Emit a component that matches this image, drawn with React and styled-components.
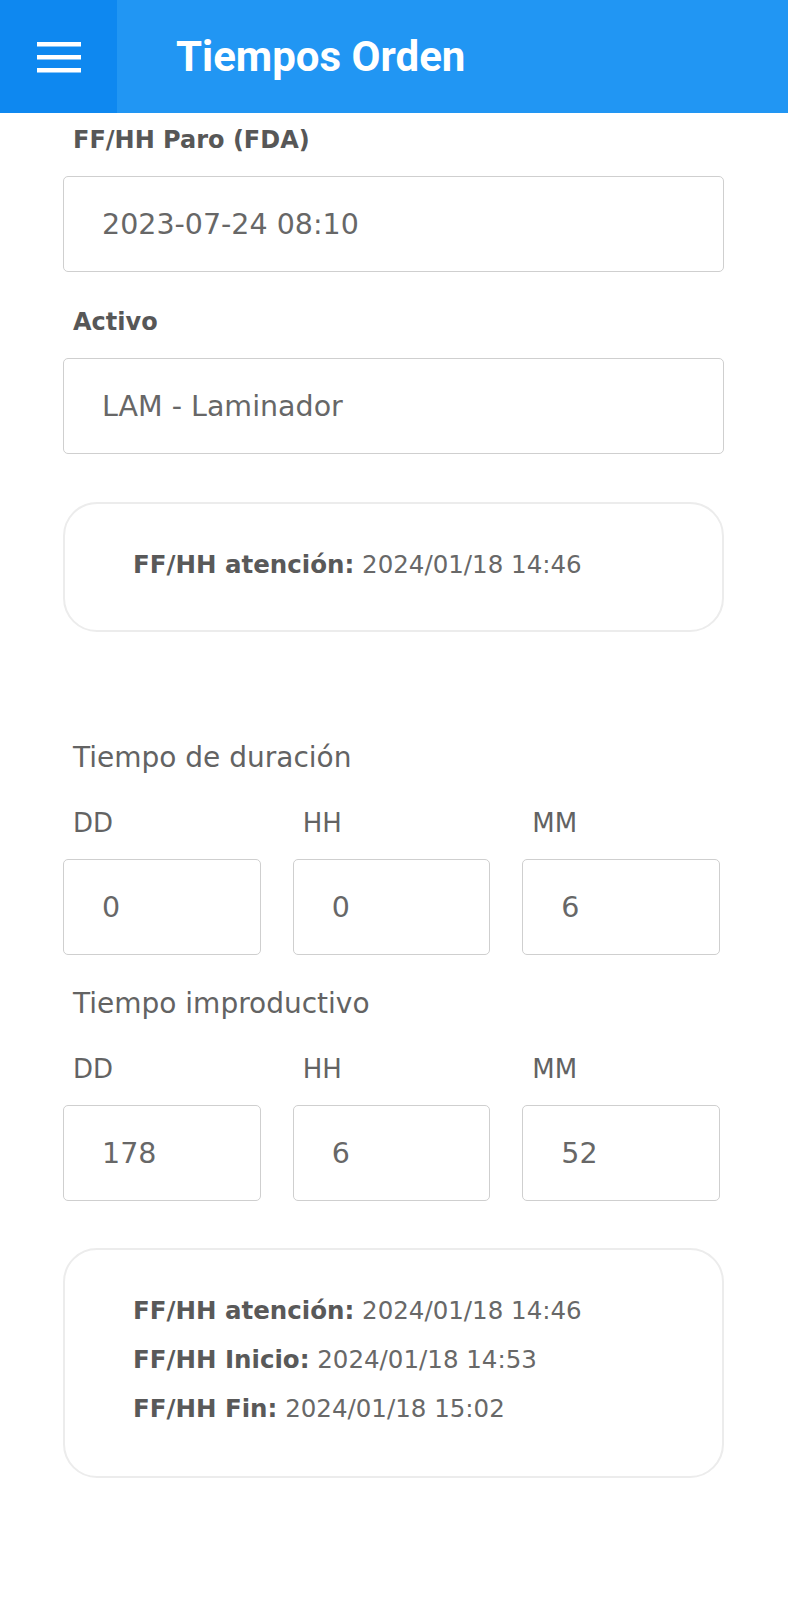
import React from 'react';
import styled, { createGlobalStyle } from 'styled-components';

const GlobalStyle = createGlobalStyle`
  * { box-sizing: border-box; }
  body {
    margin: 0;
    background: #ffffff;
    font-family: "DejaVu Sans", "Open Sans", sans-serif;
  }
`;

// barra superior
const AppBar = styled.header`
  display: flex;
  align-items: stretch;
  height: 113px;
  background: #2196f3;
`;

const MenuButton = styled.button`
  width: 117px;
  border: none;
  background: #0e88f0;
  display: flex;
  align-items: center;
  justify-content: center;
  padding: 0;
  cursor: pointer;
`;

const Title = styled.h1`
  margin: 0 0 0 59px;
  align-self: center;
  color: #ffffff;
  font-family: Roboto, "Liberation Sans", sans-serif;
  font-weight: 700;
  font-size: 42px;
`;

const Content = styled.main`
  padding: 11px 64px 120px 63px;
`;

const Label = styled.div`
  padding-left: 10px;
  font-size: ${p => p.size || 24}px;
  line-height: 32px;
  font-weight: ${p => (p.bold ? 700 : 400)};
  color: ${p => (p.bold ? '#575757' : '#636363')};
  margin-top: ${p => p.top || 0}px;
`;

const Field = styled.div`
  height: 96px;
  margin-top: 20px;
  border: 1.5px solid #cfcfcf;
  border-radius: 5px;
  display: flex;
  align-items: center;
  padding-left: 38px;
  font-size: 28.5px;
  color: #676767;
`;

const InfoCard = styled.section`
  margin-top: ${p => p.top}px;
  border: 2px solid #ececec;
  border-radius: 34px;
  padding: ${p => p.pad};
  padding-left: 68px;
  font-size: 24.5px;
  line-height: 49px;
  color: #686868;
`;

const InfoLine = styled.div`
  white-space: nowrap;
  b {
    font-weight: 700;
    color: #595959;
  }
`;

const TimeGrid = styled.div`
  display: grid;
  grid-template-columns: repeat(3, 1fr);
  column-gap: 32px;
  padding-right: 4px;
  margin-top: 33px;
`;

const TimeCell = styled.div`
  display: flex;
  flex-direction: column;
`;

const HamburgerIcon = () => (
  <svg width="44" height="36" viewBox="0 0 44 36">
    <rect x="0" y="3" width="44" height="4.5" fill="#fff" />
    <rect x="0" y="16" width="44" height="4.5" fill="#fff" />
    <rect x="0" y="29" width="44" height="4.5" fill="#fff" />
  </svg>
);

const TimeBlock = ({ title, values, top }) => (
  <>
    <Label top={top} size={28}>{title}</Label>
    <TimeGrid>
      {['DD', 'HH', 'MM'].map((unit, i) => (
        <TimeCell key={unit}>
          <Label size={26}>{unit}</Label>
          <Field>{values[i]}</Field>
        </TimeCell>
      ))}
    </TimeGrid>
  </>
);

const App = () => {
  return (
    <>
      <GlobalStyle />
      <AppBar>
        <MenuButton aria-label="menu">
          <HamburgerIcon />
        </MenuButton>
        <Title>Tiempos Orden</Title>
      </AppBar>
      <Content>
        <Label bold>FF/HH Paro (FDA)</Label>
        <Field>2023-07-24 08:10</Field>

        <Label bold top={34}>Activo</Label>
        <Field>LAM - Laminador</Field>

        <InfoCard top={48} pad="36px 20px 41px">
          <InfoLine><b>FF/HH atención:</b> 2024/01/18 14:46</InfoLine>
        </InfoCard>

        <TimeBlock title="Tiempo de duración" values={['0', '0', '6']} top={110} />
        <TimeBlock title="Tiempo improductivo" values={['178', '6', '52']} top={33} />

        <InfoCard top={47} pad="36px 20px 43px">
          <InfoLine><b>FF/HH atención:</b> 2024/01/18 14:46</InfoLine>
          <InfoLine><b>FF/HH Inicio:</b> 2024/01/18 14:53</InfoLine>
          <InfoLine><b>FF/HH Fin:</b> 2024/01/18 15:02</InfoLine>
        </InfoCard>
      </Content>
    </>
  );
};

export default App;
